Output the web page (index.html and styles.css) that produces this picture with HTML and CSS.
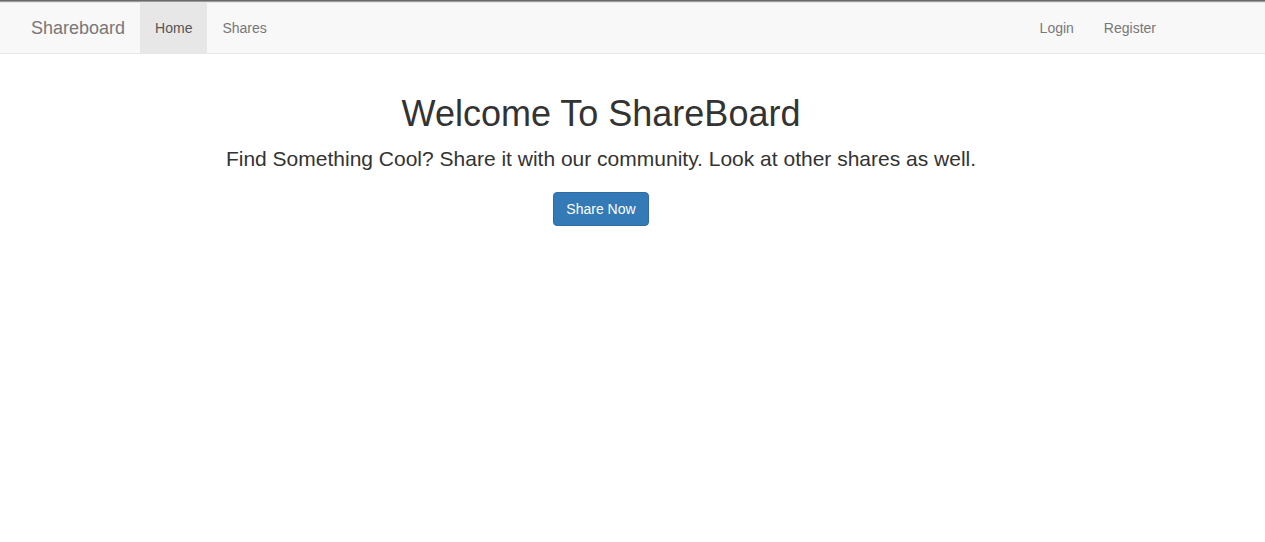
FILE: index.html
```html
<!DOCTYPE html>
<html lang="en">
<head>
<meta charset="utf-8">
<title>Shareboard</title>
<link rel="stylesheet" href="styles.css">
</head>
<body>
<div class="topline"></div>
<nav class="navbar">
  <div class="container nav-inner">
    <div class="nav-left">
      <a class="brand" href="#">Shareboard</a>
      <ul class="nav">
        <li><a class="active" href="#">Home</a></li>
        <li><a href="#">Shares</a></li>
      </ul>
    </div>
    <ul class="nav">
      <li><a href="#">Login</a></li>
      <li><a href="#">Register</a></li>
    </ul>
  </div>
</nav>
<main class="container main">
  <div class="hero">
    <h1>Welcome To ShareBoard</h1>
    <p class="lead">Find Something Cool? Share it with our community. Look at other shares as well.</p>
    <a class="btn" href="#">Share Now</a>
  </div>
</main>
</body>
</html>
```
FILE: styles.css
```css
* { box-sizing: border-box; }
html, body { margin: 0; padding: 0; }
body {
  font-family: "Liberation Sans", Arial, Helvetica, sans-serif;
  font-size: 14px;
  line-height: 1.42857;
  color: #333;
  background: #fff;
}
.topline {
  height: 2px;
  background: #6a6a6a;
  border-bottom: 1px solid #9a9a9a;
}
.navbar {
  background: #f8f8f8;
  border-top: 1px solid #e7e7e7;
  border-bottom: 1px solid #e7e7e7;
  margin-bottom: 20px;
}
.container {
  width: 1170px;
  margin-left: 16px;
}
.nav-inner {
  display: flex;
  justify-content: space-between;
  height: 50px;
  padding: 0 15px 0 0;
}
.nav-left { display: flex; }
.brand {
  display: block;
  padding: 15px;
  font-size: 18px;
  line-height: 20px;
  color: #777;
  text-decoration: none;
}
.nav {
  display: flex;
  list-style: none;
  margin: 0;
  padding: 0;
}
.nav a {
  display: block;
  padding: 15px;
  line-height: 20px;
  color: #777;
  text-decoration: none;
}
.nav a.active {
  background: #e7e7e7;
  color: #555;
}
.main {
  display: flow-root;
  padding: 0 15px;
}
.hero { text-align: center; }
h1 {
  margin: 20px 0 10px;
  font-size: 36px;
  font-weight: 500;
  line-height: 1.1;
}
.lead {
  margin: 0 0 19px;
  font-size: 21px;
  font-weight: 300;
  line-height: 1.4;
}
.btn {
  display: inline-block;
  padding: 6px 12px;
  font-size: 14px;
  line-height: 20px;
  color: #fff;
  background: #337ab7;
  border: 1px solid #2e6da4;
  border-radius: 4px;
  text-decoration: none;
}
```
